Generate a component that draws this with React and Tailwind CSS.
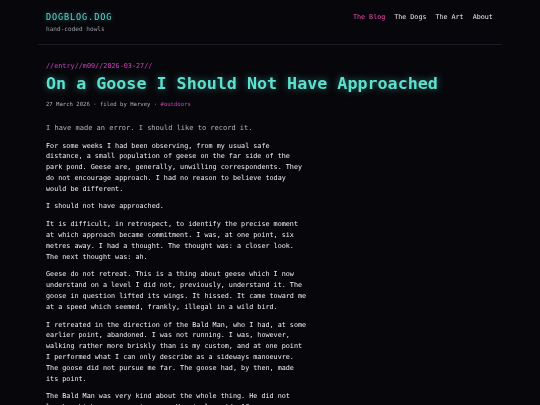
import React from 'react';

// Nav items for the header
const NAV = [
  { label: 'The Blog', active: true },
  { label: 'The Dogs' },
  { label: 'The Art' },
  { label: 'About' },
];

const PARAGRAPHS = [
  'For some weeks I had been observing, from my usual safe distance, a small population of geese on the far side of the park pond. Geese are, generally, unwilling correspondents. They do not encourage approach. I had no reason to believe today would be different.',
  'I should not have approached.',
  'It is difficult, in retrospect, to identify the precise moment at which approach became commitment. I was, at one point, six metres away. I had a thought. The thought was: a closer look. The next thought was: ah.',
  'Geese do not retreat. This is a thing about geese which I now understand on a level I did not, previously, understand it. The goose in question lifted its wings. It hissed. It came toward me at a speed which seemed, frankly, illegal in a wild bird.',
  'I retreated in the direction of the Bald Man, who I had, at some earlier point, abandoned. I was not running. I was, however, walking rather more briskly than is my custom, and at one point I performed what I can only describe as a sideways manoeuvre. The goose did not pursue me far. The goose had, by then, made its point.',
  'The Bald Man was very kind about the whole thing. He did not laugh, which was a great mercy. He simply said, "Come away, Harvey," and we went home by the long path, which avoids the pond.',
];

const Header = () => (
  <header className="mx-auto max-w-[464px] px-2 pt-[12px] pb-[11px] border-b border-[#1a1a22] flex justify-between items-start">
    <div className="[will-change:transform]">
      <div className="text-[8.5px] leading-[10px] tracking-[0.9px] text-[#5ad8cc] [text-shadow:0_0_5px_rgba(79,209,197,0.55)]">
        DOGBLOG.DOG
      </div>
      <div className="mt-[3px] text-[6.1px] leading-[8px] text-[#9a9aa4]">hand-coded howls</div>
    </div>
    <nav className="flex gap-[9px] pr-[1px] text-[6.7px] leading-[10px] [will-change:transform]">
      {NAV.map((item) => (
        <a
          key={item.label}
          className={item.active ? 'text-[#ee4fb0]' : 'text-[#e6e6ec]'}
        >
          {item.label}
        </a>
      ))}
    </nav>
  </header>
);

export default function App() {
  return (
    <div className="min-h-screen bg-[#07070b] font-['DejaVu_Sans_Mono',monospace] overflow-hidden">
      <Header />
      <main className="px-[46px] pt-[16.5px] [will-change:transform]">
        <div className="text-[6.8px] leading-[9px] text-[#cc40c0]">//entry//m09//2026-03-27//</div>
        <h1 className="mt-[0.5px] text-[16.7px] leading-[24px] font-bold text-[#5ee0cf] whitespace-nowrap [text-shadow:0_0_7px_rgba(94,224,207,0.5)]">
          On a Goose I Should Not Have Approached
        </h1>
        <div className="mt-[5px] text-[5.6px] leading-[8px] text-[#b0b0b9]">
          27 March 2026 · filed by Harvey · <span className="text-[#cc40c0]">#outdoors</span>
        </div>
        <article className="max-w-[64.4ch] text-[6.75px] leading-[10.8px] text-[#ececf2]">
          <p className="mt-[14.5px] text-[7px] leading-[11px] text-[#b2b2bb]">
            I have made an error. I should like to record it.
          </p>
          {PARAGRAPHS.map((p, i) => (
            <p key={i} className="mt-[7px]">
              {p}
            </p>
          ))}
        </article>
      </main>
    </div>
  );
}
